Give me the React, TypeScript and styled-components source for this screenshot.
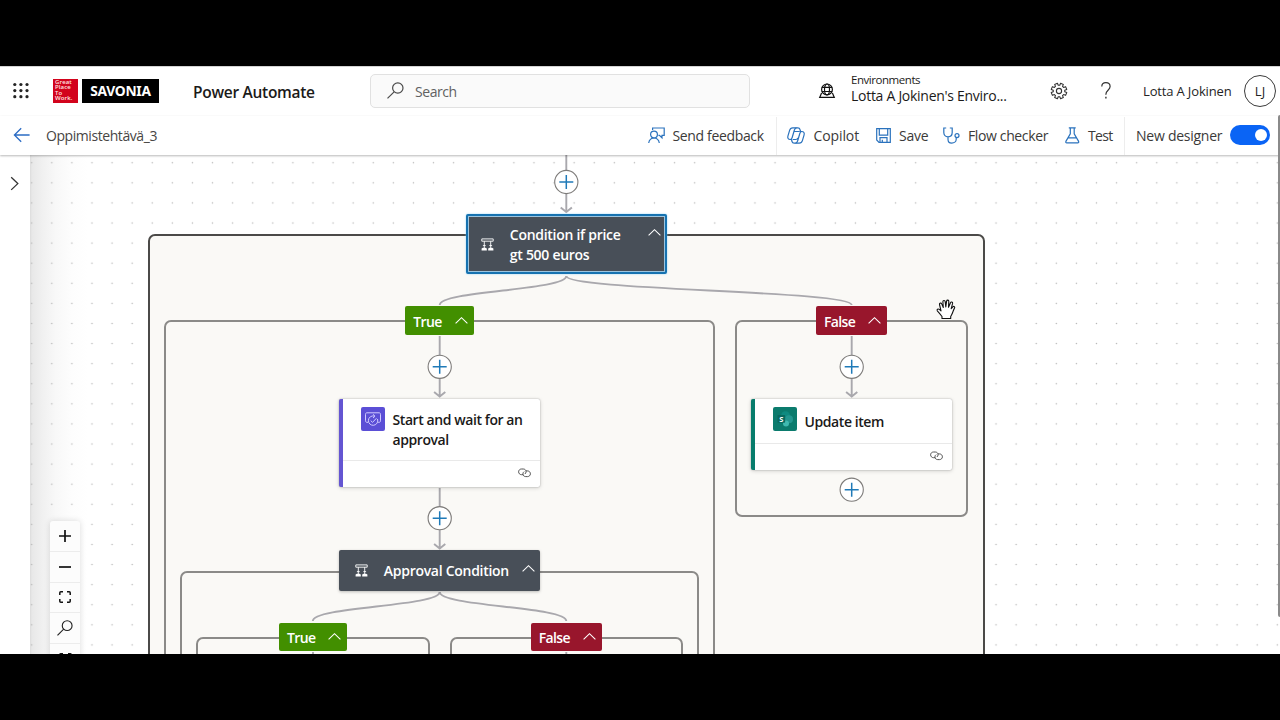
import React from "react";
import styled, { createGlobalStyle, css } from "styled-components";

const GlobalStyle = createGlobalStyle`
  * { box-sizing: border-box; }
  body { margin: 0; background: #000; font-family: "Open Sans", "Noto Sans", sans-serif; color: #242424; }
  svg { display: block; overflow: visible; }
`;

const Stage = styled.div`
  width: 1280px;
  height: 720px;
  padding: 66px 0;
  background: #000;
  overflow: hidden;
`;
const Screen = styled.div`
  position: relative;
  display: flex;
  flex-direction: column;
  height: 588px;
  background: #fff;
  overflow: hidden;
`;

/* ---------- header ---------- */
const Header = styled.header`
  display: grid;
  grid-template-columns: 53px 140px 177px 449px 32px 199px 48px 45px 101px 36px;
  align-items: center;
  height: 50px;
  padding-bottom: 2px;
  border-top: 1px solid #d4d4d4;
  flex: none;
`;
const Cell = styled.div<{ $pad?: number }>`
  display: flex;
  align-items: center;
  padding-left: ${(p) => p.$pad ?? 0}px;
`;
const Brand = styled.div`
  display: flex;
  gap: 4px;
`;
const RedTile = styled.div`
  width: 25px;
  height: 24px;
  padding: 1px 0 0 2px;
  background: #d2031c;
  color: #ffe3e3;
  font: 600 6px/5.5px "Open Sans", sans-serif;
  letter-spacing: 0.1px;
  white-space: pre;
`;
const BlackTile = styled.div`
  width: 77px;
  height: 24px;
  background: #000;
  color: #fff;
  text-align: center;
  font: 700 13.8px/23px "Noto Sans", sans-serif;
  letter-spacing: -0.3px;
`;
const AppName = styled.div`
  font-size: 15.5px;
  font-weight: 600;
  letter-spacing: -0.29px;
  color: #1b1a19;
  white-space: nowrap;
  padding-top: 2px;
`;
const SearchBox = styled.div`
  display: flex;
  align-items: center;
  gap: 11px;
  width: 380px;
  height: 34px;
  padding-left: 16px;
  background: #fafafa;
  border: 1px solid #e1e1e1;
  border-radius: 5px;
  font-size: 14px;
  letter-spacing: -0.45px;
  color: #616161;
`;
const SearchHint = styled.span`
  padding-top: 2px;
`;
const EnvBlock = styled.div`
  display: flex;
  flex-direction: column;
  margin-top: -4px;
  white-space: nowrap;
  color: #1b1a19;
`;
const EnvCaption = styled.span`
  padding-top: 1px;
  font-size: 11.5px;
  line-height: 14px;
  letter-spacing: -0.45px;
`;
const EnvName = styled.span`
  font-size: 14px;
  line-height: 18px;
  letter-spacing: -0.28px;
`;
const UserName = styled.span`
  font-size: 13px;
  letter-spacing: -0.15px;
  white-space: nowrap;
  padding-top: 1px;
`;
const Avatar = styled.div`
  width: 32px;
  height: 32px;
  border: 1px solid #3b3b3b;
  border-radius: 50%;
  text-align: center;
  font-size: 13px;
  line-height: 30px;
`;

/* ---------- command bar ---------- */
const CommandBar = styled.div`
  display: grid;
  grid-template-columns: 14px 32px 602px 128px 11px 89px 67px 122px 59px 12px 94px 40px;
  align-items: center;
  height: 39px;
  flex: none;
  position: relative;
  z-index: 2;
  background: #fff;
  box-shadow: 0 1px 2px rgba(0, 0, 0, 0.28);
`;
const FlowTitle = styled.div`
  font-size: 14px;
  letter-spacing: -0.43px;
  color: #484644;
`;
const Command = styled.div<{ $gap: number; $tracking?: number }>`
  display: flex;
  align-items: center;
  font-size: 14px;
  letter-spacing: ${(p) => p.$tracking ?? -0.2}px;
  white-space: nowrap;
  color: #3b3a39;
  svg { flex: none; margin: -1px ${(p) => p.$gap}px 0 0; }
`;
const Separator = styled.div`
  width: 1px;
  height: 38px;
  background: #ededed;
`;
const Toggle = styled.div`
  display: flex;
  justify-content: flex-end;
  align-items: center;
  width: 40px;
  height: 20px;
  padding-right: 3px;
  margin-top: -1px;
  border-radius: 10px;
  background: #0a64f5;
`;
const Knob = styled.div`
  width: 12.5px;
  height: 12.5px;
  border-radius: 50%;
  background: #fff;
`;

/* ---------- workspace ---------- */
const Workspace = styled.div`
  display: flex;
  flex: 1;
  min-height: 0;
`;
const SidePane = styled.div`
  width: 30px;
  padding: 20.5px 0 0 9.5px;
  background: #fff;
`;
const Canvas = styled.div`
  position: relative;
  flex: 1;
  overflow: hidden;
  background: linear-gradient(90deg, #dcdcdc 0, #e8e8e8 2px, #f0f0f0 12px, #f8f8f8 26px, #fdfdfd 42px, #fff 58px);
`;
const Plane = styled.div`
  position: absolute;
  left: -30px;
  top: -155px;
  width: 1280px;
  height: 720px;
`;
const Wires = styled.svg`
  position: absolute;
  inset: 0;
`;
type Rect = { $x: number; $y: number; $w: number; $h: number };
const place = css<Rect>`
  position: absolute;
  left: ${(p) => p.$x}px;
  top: ${(p) => p.$y}px;
  width: ${(p) => p.$w}px;
  height: ${(p) => p.$h}px;
`;
const Scope = styled.div<Rect & { $outer?: boolean }>`
  ${place}
  border: 2px solid ${(p) => (p.$outer ? "#4b4a48" : "#8b8a88")};
  border-radius: 7px;
  background: #faf9f6;
`;
const ConditionCard = styled.div<Rect & { $selected?: boolean }>`
  ${place}
  display: flex;
  align-items: center;
  padding-left: ${(p) => (p.$selected ? 13 : 16)}px;
  background: #484f58;
  border-radius: 2px;
  color: #fff;
  font-size: 14px;
  font-weight: 600;
  line-height: 20px;
  box-shadow: 0 1px 3px rgba(0, 0, 0, 0.25);
  ${(p) =>
    p.$selected &&
    css`
      border: 2px solid #1672b0;
      box-shadow: inset 0 0 0 1px #9cc4de, 0 0 2px #8fd0f5;
    `}
`;
const ConditionText = styled.div`
  flex: 1;
  padding: 2px 0 0 15.8px;
  white-space: pre;
  letter-spacing: -0.28px;
`;
const Collapse = styled.div<{ $top: number; $right: number }>`
  align-self: flex-start;
  padding: ${(p) => p.$top}px ${(p) => p.$right}px 0 0;
`;
const BranchChip = styled.div<Rect & { $yes: boolean }>`
  ${place}
  display: flex;
  align-items: center;
  justify-content: space-between;
  padding: 0 6px 0 8px;
  border-radius: 2px;
  background: ${(p) => (p.$yes ? "#428f00" : "#98162c")};
  color: #fff;
  font-size: 14px;
  font-weight: 600;
  letter-spacing: -0.65px;
`;
const BranchName = styled.span`
  padding-top: 2px;
`;
const ActionCard = styled.div<Rect & { $accent: string }>`
  ${place}
  display: flex;
  flex-direction: column;
  border-left: 4px solid ${(p) => p.$accent};
  border-radius: 2px;
  background: #fff;
  box-shadow: 0 0 1.5px rgba(0, 0, 0, 0.35), 0 1px 4px rgba(0, 0, 0, 0.16);
`;
const ActionHead = styled.div`
  display: flex;
  flex: 1;
  gap: 8px;
  padding: 8.8px 0 0 17.5px;
`;
const ActionIcon = styled.div<{ $bg: string }>`
  width: 24px;
  height: 24px;
  border-radius: 2px;
  background: ${(p) => p.$bg};
`;
const ActionTitle = styled.div<{ $top: number }>`
  padding-top: ${(p) => p.$top}px;
  font-size: 14px;
  font-weight: 600;
  line-height: 20px;
  letter-spacing: -0.42px;
  white-space: pre;
  color: #1b1a19;
`;
const ActionFoot = styled.div`
  display: flex;
  justify-content: flex-end;
  align-items: center;
  height: 27px;
  padding: 0 9px 1px 0;
  border-top: 1px solid #e9e9e9;
`;
const Controls = styled.div`
  position: absolute;
  left: 20px;
  top: 366px;
  display: flex;
  flex-direction: column;
  width: 30px;
  border-radius: 3px;
  background: #fcfcfc;
  box-shadow: 0 0 6px rgba(0, 0, 0, 0.14);
`;
const ControlButton = styled.div`
  display: flex;
  align-items: center;
  justify-content: center;
  height: 30.8px;
  border-bottom: 1px solid #ececec;
`;
const ScrollThumb = styled.div`
  position: absolute;
  z-index: 3;
  right: 0;
  top: 49px;
  width: 2px;
  height: 502px;
  border-radius: 2px 0 0 2px;
  background: #8a8a8a;
`;
const GrabCursor = styled.svg`
  position: absolute;
  left: 936px;
  top: 298.5px;
`;

const blue = { fill: "none", stroke: "#2a72bd", strokeWidth: 1.2 } as const;

const Waffle = () => (
  <svg width="16" height="16" fill="#242424">
    {[0, 1, 2].map((r) => [0, 1, 2].map((c) => <circle key={`${r}${c}`} cx={1.8 + c * 6.1} cy={1.5 + r * 6.1} r="1.6" />))}
  </svg>
);
const Lens = ({ color = "#4a4a4a", size = 17 }) => (
  <svg width={size} height={size} viewBox="0 0 17 17" fill="none" stroke={color} strokeWidth="1.2">
    <circle cx="10.8" cy="6" r="5.2" />
    <path d="M7.1 9.8L.5 16.4" />
  </svg>
);
const GlobeStand = () => (
  <svg width="16" height="16" fill="none" stroke="#111" strokeWidth="1.2">
    <circle cx="8" cy="6.4" r="5.4" />
    <ellipse cx="8" cy="6.4" rx="2.5" ry="5.4" />
    <path d="M2.8 4.4h10.4M2.8 8.5h10.4M2.6 10L.7 14.4h14.6L13.4 10" />
  </svg>
);
const gearPath = (() => {
  const pts: string[] = [];
  for (let i = 0; i < 8; i++) {
    const a = ((i + 0.5) * Math.PI) / 4;
    ([[-0.26, 5.8], [-0.19, 7.9], [0.19, 7.9], [0.26, 5.8]] as const).forEach(([d, r]) =>
      pts.push(`${(8 + r * Math.sin(a + d)).toFixed(2)} ${(8 - r * Math.cos(a + d)).toFixed(2)}`)
    );
  }
  return `M${pts.join("L")}Z`;
})();
const Gear = () => (
  <svg width="16" height="16" fill="none" stroke="#333" strokeWidth="1.1" strokeLinejoin="round">
    <path d={gearPath} />
    <circle cx="8" cy="8" r="2.6" />
  </svg>
);
const Help = () => (
  <svg width="10" height="17" fill="none" stroke="#333" strokeWidth="1.2">
    <path d="M.8 4.6C.8 2.2 2.6.7 4.9.7s4.2 1.5 4.2 3.9c0 3.4-4.2 4-4.2 7.6v.6" />
    <path d="M4.9 14.8v1.6" strokeWidth="1.4" />
  </svg>
);
const BackArrow = () => (
  <svg width="17" height="15" fill="none" stroke="#2b6cc4" strokeWidth="1.3">
    <path d="M15.6 7H.4M7.2.2L.4 7l6.800 6.800" />
  </svg>
);
const FeedbackIcon = () => (
  <svg width="17" height="17" {...blue}>
    <circle cx="6" cy="7.6" r="3.4" />
    <path d="M.7 16c.5-3 2.6-5 5.3-5s4.800 2 5.300 5M4.600 3V1h11.600v7.400h-2.200v2.400l-2.600-2.400h-1" />
  </svg>
);
const CopilotIcon = () => (
  <svg width="18" height="17" {...blue} strokeLinejoin="round">
    <path d="M5.300 12.500H3.200C1.200 12.500.4 11 .9 9.200L2.600 3.300C3.100 1.600 4 .8 5.700.8h5.200c1.200 0 1.800.6 2.100 1.700l.6 2" />
    <path d="M12.700 4.500h2.100c2 0 2.800 1.500 2.300 3.300l-1.700 5.900c-.5 1.700-1.400 2.500-3.100 2.500H7.100c-1.200 0-1.800-.6-2.100-1.700l-.5-2" />
    <path d="M9.500.8C8.300.8 7.700 1.900 7.300 3.200L5.200 10.500c-.4 1.300-1 2-2 2M8.500 16.200c1.200 0 1.800-1.100 2.200-2.400l2.100-7.300c.4-1.300 1-2 2-2M6 12.500h2.800c1.200 0 1.700-.7 2-1.700M7.200 4.500h5.500" />
  </svg>
);
const SaveIcon = () => (
  <svg width="15" height="15" {...blue}>
    <path d="M.7.7h13.600v13.600H3L.7 12zM3.300.7v6.400h8.400V.7M4 14.300v-4.700h7v4.700M6.300 14.300v-2.500" />
  </svg>
);
const StethoscopeIcon = () => (
  <svg width="17" height="17" {...blue}>
    <path d="M3.200 1H.8v4.500c0 2.600 1.700 4.300 4.200 4.300s4.200-1.700 4.200-4.300V1H6.800M5 9.800v2.400c0 2.400 1.400 3.900 3.700 3.900s4.500-1.400 4.500-3.900v-1.400" />
    <circle cx="14" cy="8.600" r="2" />
  </svg>
);
const FlaskIcon = () => (
  <svg width="15" height="17" {...blue}>
    <path d="M3.800.9h6.900M5.300.9v6L.9 14.400c-.4.8 0 1.500.9 1.500h10.900c.9 0 1.300-.7.9-1.500L9.200 6.900v-6M3.400 10.900h7.700" />
  </svg>
);
const ChevronUp = () => (
  <svg width="13" height="7" fill="none" stroke="#fff" strokeWidth="1.1">
    <path d="M.6 6.400L6.500.7l5.900 5.700" />
  </svg>
);
const ConditionIcon = () => (
  <svg width="13" height="13" fill="none" stroke="#fff" strokeWidth=".9">
    <path d="M.8.9h11.400v2.300H.8zM3.300 3.200v7M9.700 3.200v7M1.900 7.600h2.800M8.300 7.600h2.800" />
    <path d="M.6 12.500v-2l1.300-.8h2.600l1.300.8v2zM7.200 12.500v-2l1.300-.8h2.600l1.300.8v2z" fill="#fff" stroke="none" />
  </svg>
);
const LinkIcon = () => (
  <svg width="13" height="10" fill="none" stroke="#4a4a4a" strokeWidth=".95">
    <path d="M5.100 6.700H3.500C1.900 6.700.6 5.400.6 3.800S1.900 1 3.500 1h1.800c1.600 0 2.800 1.200 2.800 2.700 0 1-.5 1.800-1.300 2.300" />
    <path d="M7.900 2.900h1.600c1.600 0 2.900 1.300 2.900 2.900S11.100 8.600 9.500 8.600H7.700C6.100 8.600 4.900 7.400 4.900 5.900c0-1 .5-1.800 1.300-2.300" />
  </svg>
);
const ApprovalGlyph = () => (
  <svg width="24" height="24" fill="none" stroke="#d0caff" strokeWidth="1">
    <path d="M7 15.300H6c-1 0-1.500-.6-1.500-1.500V7.300c0-1 .5-1.500 1.500-1.500h12c1 0 1.500.5 1.500 1.500v6.500c0 .9-.5 1.500-1.500 1.500h-.9" />
    <path d="M13.400 9.100A4.700 4.700 0 1 0 16.500 12M12 7.300l2 1.900-2 1.800M9.700 13.600l1.800 1.800 4-4.200" />
  </svg>
);
const SharePointGlyph = () => (
  <svg width="24" height="24">
    <circle cx="12.500" cy="8.800" r="4.500" fill="#0f8a80" />
    <circle cx="16" cy="12.300" r="4" fill="#23968f" />
    <circle cx="13" cy="16.600" r="3" fill="#3fb9af" />
    <rect x="4.500" y="8" width="7.600" height="7.800" rx=".8" fill="#08695f" />
    <text x="8.300" y="14.500" textAnchor="middle" fontSize="7.500" fontWeight="700" fill="#fff" fontFamily="Open Sans, sans-serif">S</text>
  </svg>
);

const Dots = () => (
  <Wires width="1280" height="720">
    <defs>
      <pattern id="dots" x="21.700" y="152.700" width="20.090" height="20.090" patternUnits="userSpaceOnUse">
        <circle cx="10" cy="10" r=".75" fill="#b4b4b4" />
      </pattern>
    </defs>
    <rect width="1280" height="720" fill="url(#dots)" />
  </Wires>
);
const AddStep = ({ x, y }: { x: number; y: number }) => (
  <g transform={`translate(${x} ${y})`} fill="none">
    <circle r="11.600" fill="#fff" stroke="#7d7b79" strokeWidth="1.100" />
    <path d="M-7 0H7M0-7V7" stroke="#1f7ab8" strokeWidth="1.500" />
  </g>
);
const Arrow = ({ x, from, to }: { x: number; from: number; to: number }) => (
  <path d={`M${x} ${from}V${to}M${x - 5.6} ${to - 4.6}L${x} ${to}l5.600 -4.600`} />
);
const fork = (x: number, y: number, tx: number, ty: number) => {
  const m = (y + ty) / 2;
  return `M${x} ${y}C${x} ${m} ${tx} ${m} ${tx} ${ty}`;
};

export default function App() {
  return (
    <Stage>
      <GlobalStyle />
      <Screen>
        <Header>
          <Cell $pad={13}><Waffle /></Cell>
          <Brand>
            <RedTile>{"Great\nPlace\nTo\nWork."}</RedTile>
            <BlackTile>SAVONIA</BlackTile>
          </Brand>
          <AppName>Power Automate</AppName>
          <SearchBox><Lens /><SearchHint>Search</SearchHint></SearchBox>
          <GlobeStand />
          <EnvBlock>
            <EnvCaption>Environments</EnvCaption>
            <EnvName>Lotta A Jokinen's Enviro...</EnvName>
          </EnvBlock>
          <Cell $pad={1}><Gear /></Cell>
          <Cell $pad={3}><Help /></Cell>
          <UserName>Lotta A Jokinen</UserName>
          <Avatar>LJ</Avatar>
        </Header>
        <CommandBar>
          <span />
          <BackArrow />
          <FlowTitle>Oppimistehtävä_3</FlowTitle>
          <Command $gap={7.5} $tracking={-0.35}><FeedbackIcon />Send feedback</Command>
          <Separator />
          <Command $gap={8.5} $tracking={-0.1}><CopilotIcon />Copilot</Command>
          <Command $gap={8}><SaveIcon />Save</Command>
          <Command $gap={8} $tracking={-0.37}><StethoscopeIcon />Flow checker</Command>
          <Command $gap={8} $tracking={-0.7}><FlaskIcon />Test</Command>
          <Separator />
          <Command $gap={0} $tracking={-0.25}>New designer</Command>
          <Toggle><Knob /></Toggle>
        </CommandBar>
        <Workspace>
          <SidePane>
            <svg width="9" height="15" fill="none" stroke="#333" strokeWidth="1.300"><path d="M1.200 1.300l6.600 6.300-6.600 6.300" /></svg>
          </SidePane>
          <Canvas>
            <Plane>
              <Dots />
              <Scope $outer $x={148} $y={234} $w={836.5} $h={600} />
              <Scope $x={164} $y={320} $w={551} $h={500} />
              <Scope $x={735} $y={320} $w={233} $h={197} />
              <Scope $x={180} $y={571} $w={519} $h={300} />
              <Scope $x={196} $y={637} $w={233.5} $h={200} />
              <Scope $x={450} $y={637} $w={233} $h={200} />
              <Wires width="1280" height="720">
                <g fill="none" stroke="#a9a8ad" strokeWidth="1.9">
                  <path d="M566.300 150V172" />
                  <Arrow x={566.3} from={194} to={212} />
                  <path d={fork(566.3, 276, 439.7, 305)} />
                  <path d={fork(566.3, 276, 851.7, 305)} />
                  <path d="M439.700 336V356M851.700 336V356M439.700 488V508" />
                  <Arrow x={439.7} from={378} to={396.5} />
                  <Arrow x={851.7} from={378} to={396.5} />
                  <Arrow x={439.7} from={530} to={548.5} />
                  <path d={fork(439.7, 592, 312.8, 621)} />
                  <path d={fork(439.7, 592, 566.3, 621)} />
                  <path d="M313 652V660M566.300 652V660" />
                </g>
                <AddStep x={566.3} y={182} />
                <AddStep x={439.7} y={366.8} />
                <AddStep x={851.7} y={366.8} />
                <AddStep x={439.7} y={518.2} />
                <AddStep x={851.7} y={489.7} />
              </Wires>
              <ConditionCard $selected $x={466} $y={214} $w={201} $h={60}>
                <ConditionIcon />
                <ConditionText>{"Condition if price\ngt 500 euros"}</ConditionText>
                <Collapse $top={12.5} $right={4.2}><ChevronUp /></Collapse>
              </ConditionCard>
              <BranchChip $yes $x={405.3} $y={306} $w={68.7} $h={28.5}><BranchName>True</BranchName><ChevronUp /></BranchChip>
              <BranchChip $yes={false} $x={816} $y={306} $w={71.3} $h={28.5}><BranchName>False</BranchName><ChevronUp /></BranchChip>
              <ActionCard $accent="#6455d2" $x={339} $y={398.5} $w={201} $h={88}>
                <ActionHead>
                  <ActionIcon $bg="#5b4fd6"><ApprovalGlyph /></ActionIcon>
                  <ActionTitle $top={3}>{"Start and wait for an\napproval"}</ActionTitle>
                </ActionHead>
                <ActionFoot><LinkIcon /></ActionFoot>
              </ActionCard>
              <ActionCard $accent="#077c6c" $x={751} $y={398.5} $w={201} $h={71}>
                <ActionHead>
                  <ActionIcon $bg="#0b7b6d"><SharePointGlyph /></ActionIcon>
                  <ActionTitle $top={4.5}>Update item</ActionTitle>
                </ActionHead>
                <ActionFoot><LinkIcon /></ActionFoot>
              </ActionCard>
              <ConditionCard $x={339} $y={550} $w={201.3} $h={40.5}>
                <ConditionIcon />
                <ConditionText>Approval Condition</ConditionText>
                <Collapse $top={15} $right={5.5}><ChevronUp /></Collapse>
              </ConditionCard>
              <BranchChip $yes $x={279} $y={622.5} $w={68} $h={28.5}><BranchName>True</BranchName><ChevronUp /></BranchChip>
              <BranchChip $yes={false} $x={530.7} $y={622.5} $w={71} $h={28.5}><BranchName>False</BranchName><ChevronUp /></BranchChip>
              <GrabCursor width="20" height="21" viewBox="0 0 20 21" fill="#fff" stroke="#111" strokeWidth="1.1" strokeLinejoin="round">
                <path d="M6 19.500v-2C4.500 15.500 3 13.500 1.300 11.800c-.8-1.200.8-2.400 2-1.400l1.700 1.500L3.500 5.500c-.3-1.500 1.700-2 2.200-.6L7.300 8.500 6.900 2.800c0-1.600 2-1.700 2.300-.2l.6 5.400.8-5.900c.3-1.500 2.300-1.300 2.200.3L12.500 8.300l2-4.600c.6-1.300 2.400-.7 2.100.7l-1.400 5.200 1.700-1.800c1-.9 2.300.2 1.600 1.300-1.200 1.900-1.600 4.600-3 6.900l-.8 1.500v2z" />
              </GrabCursor>
            </Plane>
            <Controls>
              <ControlButton><svg width="12" height="12" stroke="#111" strokeWidth="1.7"><path d="M0 6h12M6 0v12" /></svg></ControlButton>
              <ControlButton><svg width="12" height="12" stroke="#111" strokeWidth="1.7"><path d="M0 6h12" /></svg></ControlButton>
              <ControlButton>
                <svg width="12" height="12" fill="none" stroke="#111" strokeWidth="1.5"><path d="M.8 4V1.800q0-1 1-1H4M8 .8h2.200q1 0 1 1V4M11.200 8v2.200q0 1-1 1H8M4 11.200H1.800q-1 0-1-1V8" /></svg>
              </ControlButton>
              <ControlButton><Lens color="#222" size={16} /></ControlButton>
              <ControlButton>
                <svg width="13" height="13" fill="none" stroke="#111" strokeWidth="1.5"><path d="M.8 4V1.800q0-1 1-1H4M9 .8h2.200q1 0 1 1V4" /></svg>
              </ControlButton>
            </Controls>
          </Canvas>
        </Workspace>
        <ScrollThumb />
      </Screen>
    </Stage>
  );
}
